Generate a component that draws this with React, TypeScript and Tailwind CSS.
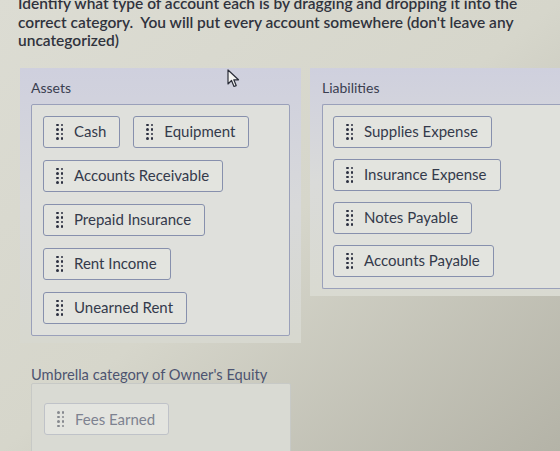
import React from 'react';

type Item = { id: string; label: string };

const assets: Item[][] = [
  [
    { id: 'cash', label: 'Cash' },
    { id: 'equipment', label: 'Equipment' },
  ],
  [{ id: 'ar', label: 'Accounts Receivable' }],
  [{ id: 'prepaid', label: 'Prepaid Insurance' }],
  [{ id: 'rent-income', label: 'Rent Income' }],
  [{ id: 'unearned', label: 'Unearned Rent' }],
];

const liabilities: Item[] = [
  { id: 'supplies', label: 'Supplies Expense' },
  { id: 'insurance', label: 'Insurance Expense' },
  { id: 'notes', label: 'Notes Payable' },
  { id: 'ap', label: 'Accounts Payable' },
];

const Handle: React.FC<{ faded?: boolean }> = ({ faded }) => (
  <span className={`grid grid-cols-2 gap-x-[2px] gap-y-[2px] ${faded ? 'opacity-50' : ''}`}>
    {Array.from({ length: 8 }).map((_, i) => (
      <span key={i} className="w-[2.5px] h-[2.5px] rounded-full bg-[#2c3040]" />
    ))}
  </span>
);

const Chip: React.FC<{ label: string; faded?: boolean }> = ({ label, faded }) => (
  <div
    className={`h-[32px] flex items-center gap-[11px] pl-[12px] pr-[13px] rounded-[3px] border-[1.5px] bg-[#e3e4df] ${
      faded ? 'border-[#bfc2c8] text-[#7d8290]' : 'border-[#8790ad] text-[#343a4b]'
    }`}
  >
    <Handle faded={faded} />
    <span className="text-[15px] leading-none">{label}</span>
  </div>
);

const Cursor = () => (
  <svg className="absolute left-[227px] top-[69px]" width="13" height="19" viewBox="0 0 13 19">
    <path d="M1 1 L1 15 L4.5 11.5 L7 17.5 L9.2 16.6 L6.8 10.8 L11.5 10.8 Z" fill="#f4f4f2" stroke="#2a2d38" strokeWidth="1.2" strokeLinejoin="round" />
  </svg>
);

export default function App() {
  return (
    <div
      className="relative w-[560px] h-[451px] overflow-hidden bg-gradient-to-br from-[#dcdcd3] via-[#d6d6cb] to-[#b4b3a7]"
      style={{ fontFamily: 'Lato, "Open Sans", sans-serif' }}
    >
      <p className="mt-[-6px] pl-[18px] pr-[30px] text-[15.5px] leading-[18.5px] font-semibold text-[#30333d]">
        Identify what type of account each is by dragging and dropping it into the correct category.&nbsp; You will put every account
        somewhere (don't leave any uncategorized)
      </p>

      <div className="flex items-start mt-[18px]">
        {/* Assets */}
        <section className="ml-[20px] w-[281px] h-[275px] px-[11px] pt-[12px] bg-gradient-to-b from-[#cfd0de] via-[#d8d9da] to-[#d7d8cf]">
          <h3 className="text-[14px] leading-[16px] text-[#3a3e50] mb-[8px]">Assets</h3>
          <div className="w-[259px] border-[1.5px] border-[#9aa0ba] rounded-[2px] bg-[#dfe0dc] p-[11px] flex flex-col gap-[12px]">
            {assets.map((row, i) => (
              <div key={i} className="flex gap-[13px]">
                {row.map((it) => (
                  <Chip key={it.id} label={it.label} />
                ))}
              </div>
            ))}
          </div>
        </section>

        {/* Liabilities */}
        <section className="ml-[9px] flex-1 h-[228px] pl-[12px] pt-[12px] bg-gradient-to-b from-[#cfd0de] via-[#dadbd9] to-[#d9dad1]">
          <h3 className="text-[14px] leading-[16px] text-[#3a3e50] mb-[8px]">Liabilities</h3>
          <div className="border-[1.5px] border-r-0 border-[#9aa0ba] rounded-l-[2px] bg-[#e0e1dc] pl-[10px] pt-[11px] pb-[11px] flex flex-col items-start gap-[11px]">
            {liabilities.map((it) => (
              <Chip key={it.id} label={it.label} />
            ))}
          </div>
        </section>
      </div>

      {/* Owner's equity */}
      <section className="ml-[20px] w-[281px] mt-[14px] px-[11px] pt-[8px]">
        <h3 className="text-[14.7px] leading-[18px] text-[#4d5470]">Umbrella category of Owner's Equity</h3>
        <div className="w-[260px] h-[80px] border-[1.5px] border-[#c7c9c6] rounded-[2px] bg-[#d9dad3] px-[12px] pt-[12px]">
          <div className="inline-flex">
            <Chip label="Fees Earned" faded />
          </div>
        </div>
      </section>

      <Cursor />
    </div>
  );
}
